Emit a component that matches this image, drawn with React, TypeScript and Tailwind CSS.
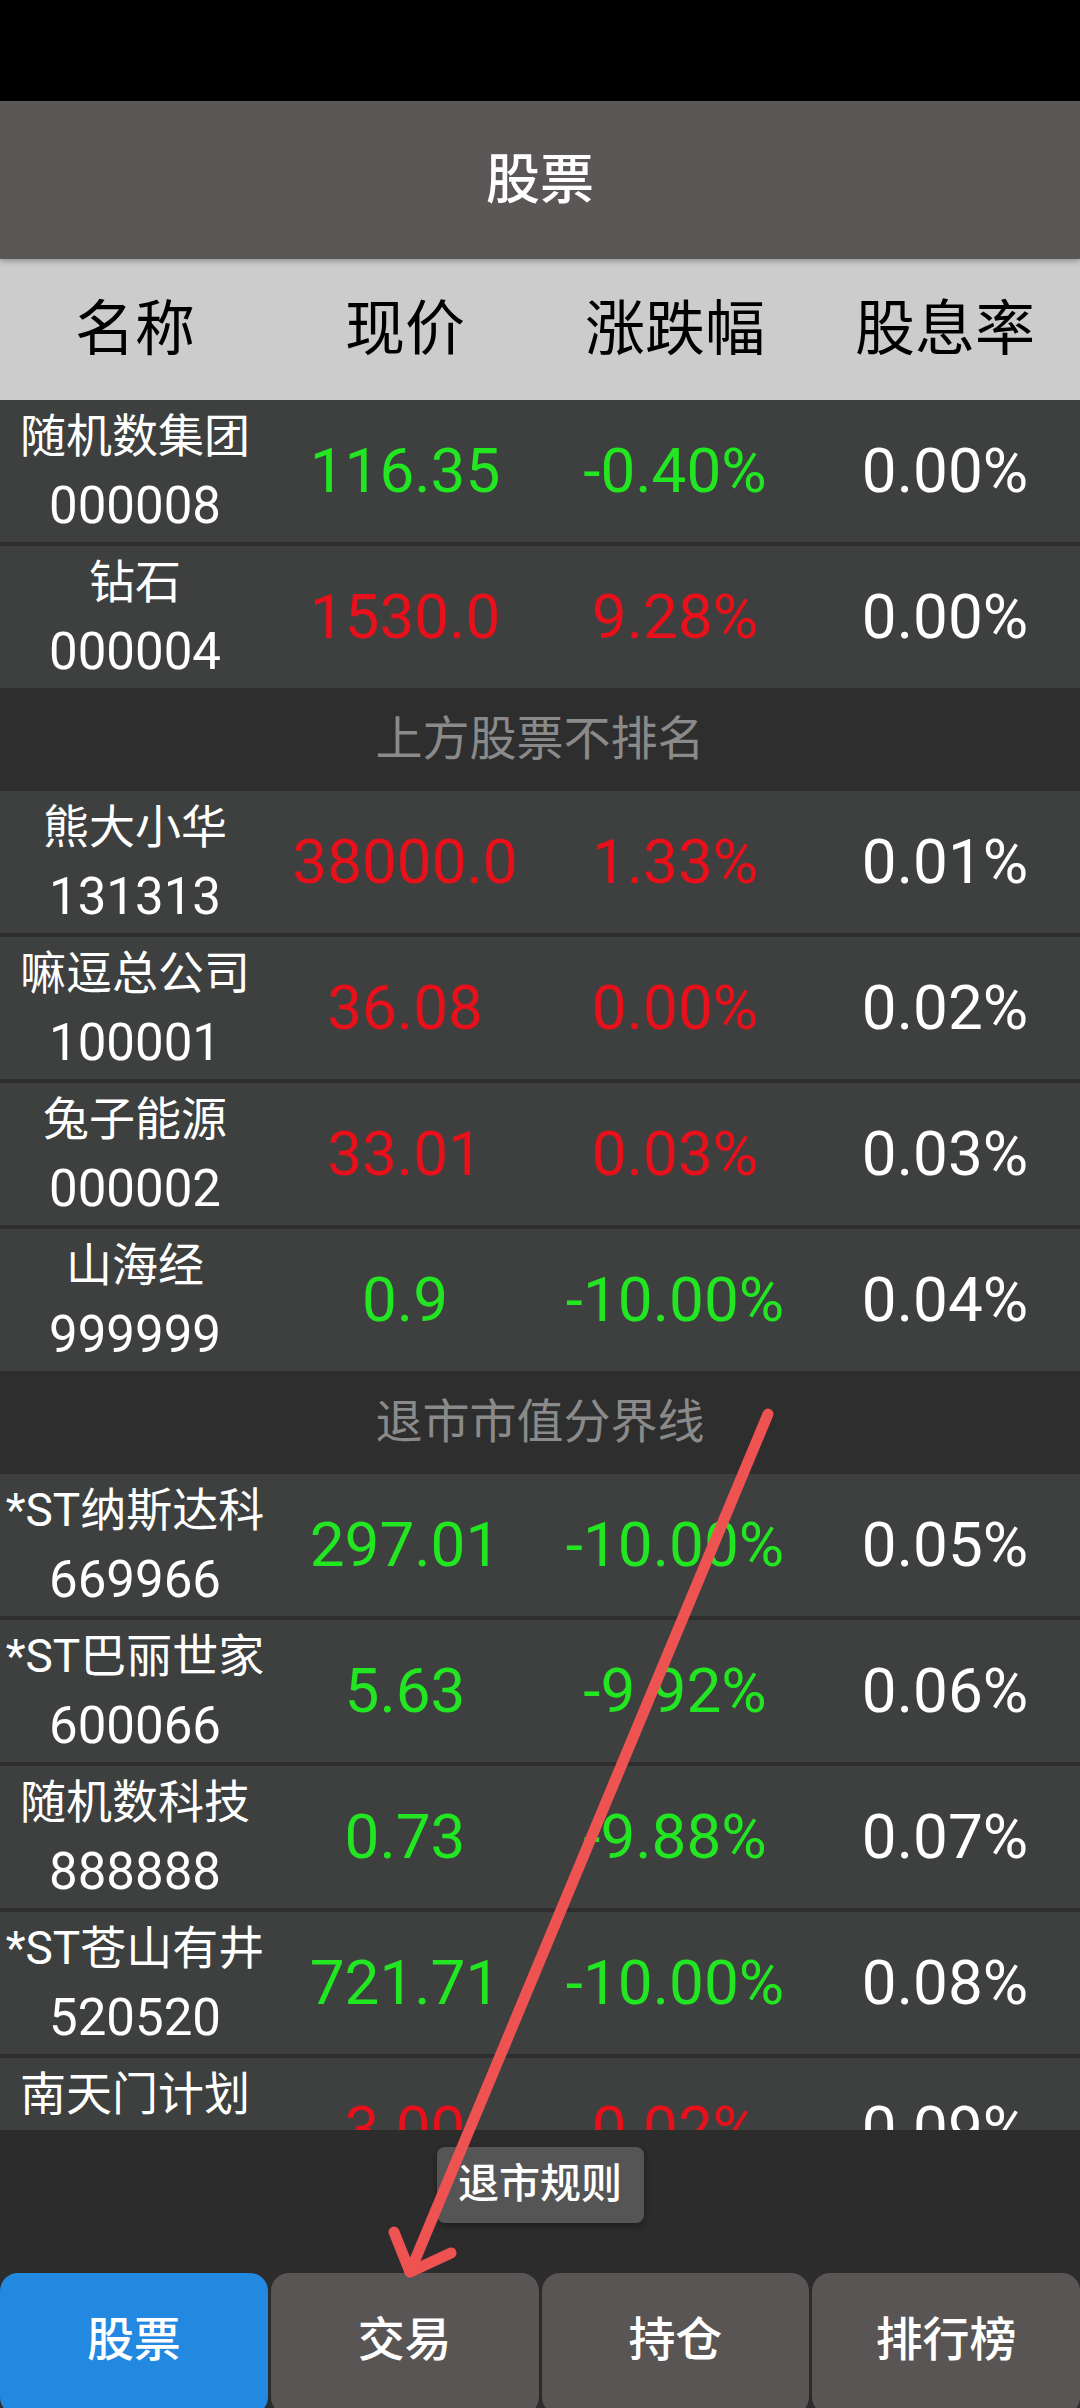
import React from "react";

type Stock = {
  name: string;
  code: string;
  price: string;
  change: string;
  rate: string;
  up: boolean;
};

type Item = { kind: "stock"; stock: Stock } | { kind: "divider"; label: string };

const s = (
  name: string,
  code: string,
  price: string,
  change: string,
  rate: string,
  up: boolean
): Item => ({ kind: "stock", stock: { name, code, price, change, rate, up } });

const items: Item[] = [
  s("随机数集团", "000008", "116.35", "-0.40%", "0.00%", false),
  s("钻石", "000004", "1530.0", "9.28%", "0.00%", true),
  { kind: "divider", label: "上方股票不排名" },
  s("熊大小华", "131313", "38000.0", "1.33%", "0.01%", true),
  s("嘛逗总公司", "100001", "36.08", "0.00%", "0.02%", true),
  s("兔子能源", "000002", "33.01", "0.03%", "0.03%", true),
  s("山海经", "999999", "0.9", "-10.00%", "0.04%", false),
  { kind: "divider", label: "退市市值分界线" },
  s("*ST纳斯达科", "669966", "297.01", "-10.00%", "0.05%", false),
  s("*ST巴丽世家", "600066", "5.63", "-9.92%", "0.06%", false),
  s("随机数科技", "888888", "0.73", "-9.88%", "0.07%", false),
  s("*ST苍山有井", "520520", "721.71", "-10.00%", "0.08%", false),
  s("南天门计划", "777777", "3.00", "0.02%", "0.09%", true),
];

const tabs = ["股票", "交易", "持仓", "排行榜"];

const StockRow = ({ stock }: { stock: Stock }) => {
  const color = stock.up ? "text-[#e8101a]" : "text-[#22e622]";
  return (
    <div className="grid grid-cols-4 h-[142px] shrink-0 bg-[#3d403e] items-center text-center">
      <div className="flex flex-col items-center text-white whitespace-nowrap">
        <span className="text-[46px] leading-[70px]">{stock.name}</span>
        <span className="text-[51px] leading-[70px]">{stock.code}</span>
      </div>
      <div className={`text-[62px] leading-none ${color}`}>{stock.price}</div>
      <div className={`text-[62px] leading-none ${color}`}>{stock.change}</div>
      <div className="text-[62px] leading-none text-white">{stock.rate}</div>
    </div>
  );
};

const Divider = ({ label }: { label: string }) => (
  <div className="h-[95px] shrink-0 flex items-center justify-center text-[47px] text-[#8a8a8a]">
    {label}
  </div>
);

export default function App() {
  return (
    <div className="relative w-[1080px] h-[2408px] overflow-hidden flex flex-col bg-[#2e2e2e] [font-family:Roboto,'Noto_Sans_CJK_SC',sans-serif]">
      <div className="h-[101px] shrink-0 bg-black" />
      <div className="relative z-10 h-[158px] shrink-0 bg-[#5a5756] flex items-center justify-center text-white text-[54px] font-medium shadow-[0_2px_6px_rgba(0,0,0,0.3)]">
        股票
      </div>
      <div className="h-[141px] shrink-0 bg-[#cccccc] grid grid-cols-4 items-center text-center text-black text-[60px]">
        <div>名称</div>
        <div>现价</div>
        <div>涨跌幅</div>
        <div>股息率</div>
      </div>

      <div className="flex-1 overflow-hidden flex flex-col gap-[4px]">
        {items.map((item, i) =>
          item.kind === "stock" ? (
            <StockRow key={i} stock={item.stock} />
          ) : (
            <Divider key={i} label={item.label} />
          )
        )}
      </div>

      <div className="h-[278px] shrink-0 flex flex-col items-center bg-[#2d2c2c]">
        <button className="mt-[17px] h-[76px] w-[207px] rounded-[8px] bg-[#565556] text-white text-[41px] font-medium shadow-[0_3px_6px_rgba(0,0,0,0.35)]">
          退市规则
        </button>
        <div className="mt-auto w-full h-[135px] overflow-hidden">
          <div className="grid grid-cols-4 gap-[3px] h-[142px]">
            {tabs.map((t, i) => (
              <div
                key={t}
                className={`rounded-[18px] flex items-center justify-center pb-[7px] text-white text-[47px] font-medium ${
                  i === 0 ? "bg-[#2288e0]" : "bg-[#585554]"
                }`}
              >
                {t}
              </div>
            ))}
          </div>
        </div>
      </div>

      {/* annotation arrow drawn over the screenshot */}
      <svg
        className="absolute inset-0 pointer-events-none"
        width="1080"
        height="2408"
        viewBox="0 0 1080 2408"
      >
        <g
          stroke="#ee5352"
          strokeWidth="11"
          strokeLinecap="round"
          strokeLinejoin="round"
          fill="none"
        >
          <line x1="768" y1="1414" x2="410" y2="2272" />
          <polyline points="394,2232 410,2272 451,2253" />
        </g>
      </svg>
    </div>
  );
}
